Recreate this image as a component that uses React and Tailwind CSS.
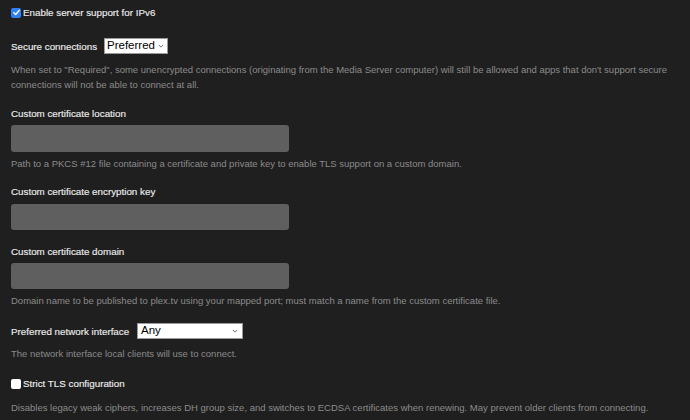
const Check = ({ checked }) =>
  checked ? (
    <span className="inline-flex h-[10px] w-[10px] shrink-0 items-center justify-center rounded-[2px] bg-[#2f7ff5]">
      <svg viewBox="0 0 10 10" className="h-[9px] w-[9px]">
        <path d="M2 5.2 L4.1 7.3 L8 2.6" fill="none" stroke="#fff" strokeWidth="1.6" strokeLinecap="round" strokeLinejoin="round" />
      </svg>
    </span>
  ) : (
    <span className="inline-block h-[10px] w-[10px] shrink-0 rounded-[2px] bg-white" />
  );

const Chevron = () => (
  <svg viewBox="0 0 8 5" className="h-[4px] w-[6px] shrink-0">
    <path d="M1 1 L4 4 L7 1" fill="none" stroke="#555" strokeWidth="1.1" />
  </svg>
);

const strong = "whitespace-nowrap text-[9.8px] leading-[15px] text-[#ebebeb] [-webkit-text-stroke:0.15px]";

const Label = ({ children, className = "" }) => <div className={`${strong} ${className}`}>{children}</div>;

const Desc = ({ children, className = "" }) => (
  <div className={`text-[9.5px] leading-[15px] text-[#8b8b8b] ${className}`}>{children}</div>
);

const Field = ({ className = "", h = "h-[26px]" }) => (
  <div className={`w-[278px] ${h} rounded-[3px] bg-[#5f5f5f] ${className}`} />
);

export default function App() {
  return (
    <div
      className="h-[420px] w-[690px] overflow-hidden bg-[#1f1f1f] px-[11px] pt-[5px]"
      style={{ fontFamily: '"Liberation Sans", Arial, sans-serif' }}
    >
      <div className="flex h-[15px] items-center gap-[2px]">
        <Check checked />
        <span className={strong}>Enable server support for IPv6</span>
      </div>

      <div className="mt-[18px] flex h-[16px] items-center">
        <span className={`w-[93px] shrink-0 ${strong}`}>Secure connections</span>
        <div className="flex h-[16px] items-center gap-[3px] border border-[#9a9a9a] bg-white pl-[2px] pr-[3px]">
          <span className="text-[11.5px] leading-none text-black">Preferred</span>
          <Chevron />
        </div>
      </div>
      <Desc className="mt-[8px] w-[668px]">
        When set to "Required", some unencrypted connections (originating from the Media Server computer) will still be allowed and apps that don't support secure connections will not be able to connect at all.
      </Desc>

      <Label className="mt-[14px]">Custom certificate location</Label>
      <Field className="mt-[4px]" h="h-[27px]" />
      <Desc className="mt-[4px]">
        Path to a PKCS #12 file containing a certificate and private key to enable TLS support on a custom domain.
      </Desc>

      <Label className="mt-[13px]">Custom certificate encryption key</Label>
      <Field className="mt-[5px]" />

      <Label className="mt-[14px]">Custom certificate domain</Label>
      <Field className="mt-[4px]" />
      <Desc className="mt-[4px]">
        Domain name to be published to plex.tv using your mapped port; must match a name from the custom certificate file.
      </Desc>

      <div className="mt-[15px] flex h-[16px] items-center">
        <span className={`w-[126px] shrink-0 ${strong}`}>Preferred network interface</span>
        <div className="flex h-[16px] w-[106px] items-center justify-between border border-[#9a9a9a] bg-white pl-[3px] pr-[4px]">
          <span className="text-[11.5px] leading-none text-black">Any</span>
          <Chevron />
        </div>
      </div>
      <Desc className="mt-[7px]">The network interface local clients will use to connect.</Desc>

      <div className="mt-[15px] flex h-[15px] items-center gap-[2px]">
        <Check />
        <span className={strong}>Strict TLS configuration</span>
      </div>
      <Desc className="mt-[9px] whitespace-nowrap">
        Disables legacy weak ciphers, increases DH group size, and switches to ECDSA certificates when renewing. May prevent older clients from connecting.
      </Desc>
    </div>
  );
}
